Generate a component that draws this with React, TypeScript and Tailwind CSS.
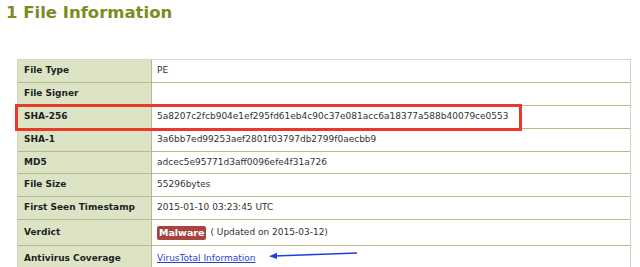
import React from "react";

const rows: { label: string; value: React.ReactNode; h: string }[] = [
  { label: "File Type", value: "PE", h: "h-[23px]" },
  { label: "File Signer", value: "", h: "h-[23px]" },
  { label: "SHA-256", value: "5a8207c2fcb904e1ef295fd61eb4c90c37e081acc6a18377a588b40079ce0553", h: "h-[23px]" },
  { label: "SHA-1", value: "3a6bb7ed99253aef2801f03797db2799f0aecbb9", h: "h-[23px]" },
  { label: "MD5", value: "adcec5e95771d3aff0096efe4f31a726", h: "h-[22px]" },
  { label: "File Size", value: "55296bytes", h: "h-[23px]" },
  { label: "First Seen Timestamp", value: "2015-01-10 03:23:45 UTC", h: "h-[23px]" },
  {
    label: "Verdict",
    value: (
      <span className="flex items-center">
        <span className="bg-[#a8443d] text-white font-bold rounded-[2px] px-[2px] h-[14px] leading-[14px] text-[9.5px]">Malware</span>
        <span className="ml-[4px]">( Updated on 2015-03-12)</span>
      </span>
    ),
    h: "h-[26px]",
  },
  {
    label: "Antivirus Coverage",
    value: <span className="text-[#2b3fd6] underline">VirusTotal Information</span>,
    h: "h-[26px]",
  },
];

export default function App() {
  return (
    <div className="relative w-[640px] h-[267px] overflow-hidden bg-white font-['DejaVu_Sans',sans-serif]">
      <h1 className="pl-[6px] pt-[3px] text-[16.5px] leading-[20px] font-bold text-[#7b8c1f]">1 File Information</h1>
      <div className="mt-[36px] ml-[17px] w-[614px] border-t border-l border-r border-[#d3d6c1]">
        {rows.map((r) => (
          <div key={r.label} className={`grid grid-cols-[134px_1fr] border-b border-[#b4bc8c] ${r.h}`}>
            <div className="bg-[#dde4c6] border-r border-[#b4bc8c] flex items-center pl-[6px] text-[9px] font-bold text-[#1e1e1e]">
              {r.label}
            </div>
            <div className="flex items-center pl-[5px] text-[9px] text-[#333]">{r.value}</div>
          </div>
        ))}
      </div>
      <div className="absolute left-[15px] top-[104px] w-[507px] h-[27px] border-[3px] border-[#e8392b]" />
      <svg className="absolute left-[266px] top-[248px]" width="96" height="14" viewBox="0 0 96 14">
        <line x1="91" y1="5" x2="8" y2="8" stroke="#1f3fe0" strokeWidth="1.5" />
        <polygon points="3,8.2 11,4.8 11,11" fill="#1f3fe0" />
      </svg>
    </div>
  );
}
